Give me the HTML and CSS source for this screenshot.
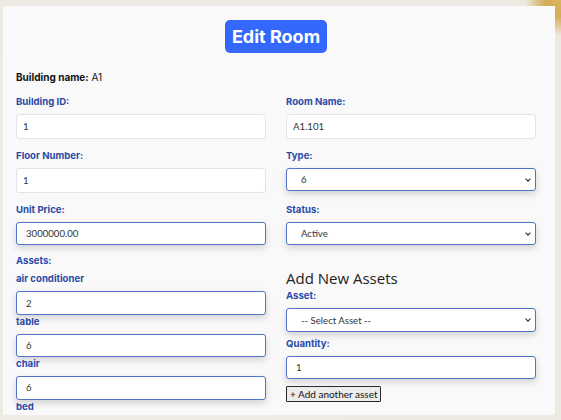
FILE: index.html
```html
<!DOCTYPE html>
<html lang="en">
<head>
<meta charset="utf-8">
<title>Edit Room</title>
<link rel="stylesheet" href="styles.css">
</head>
<body>
<div class="page">
  <div class="card">
    <div class="title-wrap"><h1 class="title">Edit Room</h1></div>
    <p class="building"><b>Building name:</b> A1</p>
    <form class="grid">
      <div class="field">
        <label class="lbl">Building ID:</label>
        <input class="inp ro" type="text" value="1">
      </div>
      <div class="field">
        <label class="lbl">Room Name:</label>
        <input class="inp ro" type="text" value="A1.101">
      </div>
      <div class="field">
        <label class="lbl">Floor Number:</label>
        <input class="inp ro" type="text" value="1">
      </div>
      <div class="field">
        <label class="lbl">Type:</label>
        <div class="sel-wrap"><select class="inp sel"><option>6</option></select></div>
      </div>
      <div class="field">
        <label class="lbl">Unit Price:</label>
        <input class="inp act" type="text" value="3000000.00">
      </div>
      <div class="field">
        <label class="lbl">Status:</label>
        <div class="sel-wrap"><select class="inp sel"><option>Active</option></select></div>
      </div>
      <div class="col assets">
        <div class="lbl assets-title">Assets:</div>
        <div class="asset">
          <label class="lbl">air conditioner</label>
          <input class="inp act" type="text" value="2">
        </div>
        <div class="asset">
          <label class="lbl">table</label>
          <input class="inp act" type="text" value="6">
        </div>
        <div class="asset">
          <label class="lbl">chair</label>
          <input class="inp act" type="text" value="6">
        </div>
        <div class="asset">
          <label class="lbl">bed</label>
          <input class="inp act" type="text" value="1">
        </div>
      </div>
      <div class="col new">
        <h3 class="new-title">Add New Assets</h3>
        <label class="lbl">Asset:</label>
        <div class="sel-wrap gap"><select class="inp sel"><option>-- Select Asset --</option></select></div>
        <label class="lbl">Quantity:</label>
        <input class="inp act qty" type="text" value="1">
        <div class="btn-row"><button type="button" class="add-btn">+ Add another asset</button></div>
      </div>
    </form>
  </div>
</div>
</body>
</html>
```
FILE: styles.css
```css
html, body {
  margin: 0;
  padding: 0;
}
body {
  width: 561px;
  height: 420px;
  overflow: hidden;
  background:
    radial-gradient(circle at 100% 0%, #d9b65c 0, #d3ad55 16px, rgba(214,178,95,0.6) 26px, rgba(238,234,227,0) 36px),
    radial-gradient(circle at 30% 60%, rgba(255,255,255,0.25) 0, rgba(255,255,255,0) 60%),
    #eeeae3;
}
.page {
  padding: 6px 6px 0 3px;
}
.card {
  width: 552px;
  height: 409px;
  box-sizing: border-box;
  background: #f9f9f9;
  padding: 14px 19px 0 13px;
  overflow: hidden;
}
.title-wrap {
  display: flex;
  justify-content: center;
}
.title {
  margin: 0;
  background: #3468fc;
  color: #fff;
  font-family: Inter, "Noto Sans", sans-serif;
  font-weight: 700;
  font-size: 18px;
  line-height: 33px;
  height: 33px;
  padding: 0 7px;
  border-radius: 5px;
}
.building {
  margin: 17px 0 0;
  font-family: Inter, "Noto Sans", sans-serif;
  font-size: 10px;
  line-height: 14px;
  color: #111;
}
.building b {
  font-weight: 700;
}
.grid {
  margin-top: 11px;
  display: grid;
  grid-template-columns: 250px 250px;
  column-gap: 20px;
  row-gap: 10px;
  align-items: start;
}
.field {
  display: flex;
  flex-direction: column;
}
.lbl {
  display: block;
  font-family: Inter, "Noto Sans", sans-serif;
  font-weight: 700;
  font-size: 9.6px;
  line-height: 14px;
  color: #2a4aa6;
  margin-bottom: 5px;
}
.inp {
  display: block;
  width: 100%;
  box-sizing: border-box;
  margin: 0;
  font-family: Lato, sans-serif;
  font-size: 9.6px;
  color: #333;
  background: #fff;
  border-radius: 3px;
  outline: none;
}
.ro {
  height: 25px;
  border: 1px solid #e4e4e4;
  padding: 0 6px;
}
.act {
  height: 23.4px;
  border: 1px solid #5274c6;
  padding: 0 9px;
  box-shadow: 0 3px 7px rgba(0, 0, 0, 0.16);
}
.sel-wrap {
  position: relative;
}
.sel-wrap::after {
  content: "";
  position: absolute;
  right: 6px;
  top: 9px;
  width: 3px;
  height: 3px;
  border-right: 1.5px solid #222;
  border-bottom: 1.5px solid #222;
  transform: rotate(45deg);
  pointer-events: none;
}
.sel {
  -webkit-appearance: none;
  appearance: none;
  height: 23.4px;
  border: 1px solid #5274c6;
  padding: 0 6px 0 14px;
  box-shadow: 0 3px 7px rgba(0, 0, 0, 0.16);
}
.col {
  display: flex;
  flex-direction: column;
}
.assets {
  margin-top: -1px;
}
.assets-title {
  margin-bottom: 4px;
}
.asset .lbl {
  margin-bottom: 5px;
}
.new-title {
  margin: 13px 0 1px;
  font-family: "Open Sans", "Noto Sans", sans-serif;
  font-weight: 500;
  font-size: 15px;
  line-height: 20px;
  color: #222;
}
.gap {
  margin-bottom: 5px;
}
.qty {
  margin-bottom: 7px;
}
.btn-row {
  display: flex;
}
.add-btn {
  height: 16px;
  padding: 0 3px;
  font-family: Lato, sans-serif;
  font-size: 10px;
  line-height: 14px;
  color: #111;
  background: #ececec;
  border: 1px solid #2a2a2a;
  border-radius: 1px;
}
```
